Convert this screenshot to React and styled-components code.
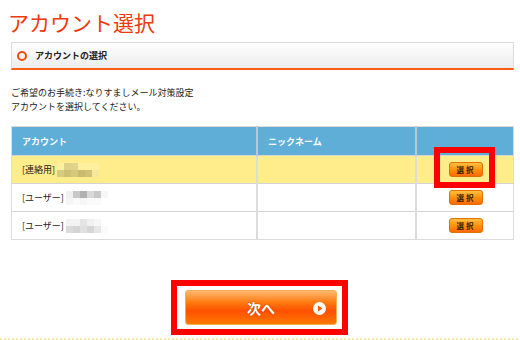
import React from "react";
import styled, {createGlobalStyle} from "styled-components";

const Global = createGlobalStyle`
  body {
    margin: 0;
    background: #fff;
    font-family: "Noto Sans CJK JP", "Noto Sans", sans-serif;
    color: #222;
  }
`
const Page = styled.div`
  width: 520px;
  height: 340px;
  overflow: hidden;
  position: relative;
  padding: 0 6px 0 11px;
  box-sizing: border-box;
`
const Title = styled.h1`
  margin: 0 0 0 -3px;
  padding-top: 10px;
  font-size: 21px;
  line-height: 24px;
  font-weight: normal;
  color: #ee3a0c;
`
const SectionBar = styled.div`
  margin-top: 8px;
  height: 25px;
  display: flex;
  align-items: center;
  gap: 8px;
  padding-left: 5px;
  border: 1px solid #dcdcdc;
  border-bottom: 2px solid #ff5a14;
  background: linear-gradient(#ffffff, #ececec);
  font-size: 9px;
  font-weight: bold;
`
const Ring = styled.span`
  width: 6px;
  height: 6px;
  border: 2px solid #f04a10;
  border-radius: 50%;
`
const Lead = styled.p`
  margin: 16px 0 0;
  font-size: 9px;
  line-height: 14px;
`
const Table = styled.table`
  margin-top: 12px;
  width: 503px;
  table-layout: fixed;
  border-collapse: collapse;
  font-size: 9px;
  border: 1px solid #dcdcdc;
`
const Th = styled.th`
  height: 28px;
  background: #5eaed8;
  color: #fff;
  text-align: left;
  padding: 0 0 0 10px;
  font-weight: bold;
  border-right: 2px solid #b8c8d4;
  width: ${p => p.$w ? p.$w + "px" : "auto"};
  &:last-child { border-right: none; }
`
const Tr = styled.tr`
  background: ${p => p.$hl ? "#ffed8c" : "#fff"};
  border-top: 1px solid #d4d4d4;
`
const Td = styled.td`
  height: 27px;
  padding: 0 0 0 10px;
  border-right: 2px solid #dcdcdc;
  text-align: ${p => p.$center ? "center" : "left"};
  &:last-child { border-right: none; padding: 0; }
`
const Name = styled.span`
  display: inline-flex;
  align-items: center;
  gap: 2px;
`
const Blur = styled.span`
  display: inline-grid;
  grid-template-columns: repeat(6, 7px);
  grid-template-rows: 7px 7px;
`
const Px = styled.span`
  background: ${p => p.$c};
`
const PickWrap = styled.span`
  position: relative;
  display: inline-block;
  margin-left: 2px;
  vertical-align: middle;
`
const PickBtn = styled.button`
  display: block;
  width: 34px;
  height: 15px;
  padding: 0;
  border: 1px solid #e07000;
  border-radius: 3px;
  background: linear-gradient(#ffc040, #ff9010 50%, #ff6a00);
  font-family: inherit;
  font-size: 7.5px;
  font-weight: bold;
  letter-spacing: 2px;
  color: #3a1a00;
  line-height: 13px;
`
const Highlight = styled.span`
  position: absolute;
  left: -15px;
  top: -15px;
  right: -12px;
  bottom: -11px;
  border: 6px solid #ff0000;
  pointer-events: none;
`
const Footer = styled.div`
  display: flex;
  justify-content: center;
  margin-top: 40px;
  padding-right: 6px;
`
const RedFrame = styled.div`
  border: 6px solid #ff0000;
  padding: 4px 5px 4px 8px;
`
const NextBtn = styled.button`
  width: 152px;
  height: 35px;
  border: 1px solid #f0b050;
  border-radius: 3px;
  background: linear-gradient(#ffb870, #ff7a10 35%, #ff5000 60%, #ff7800);
  color: #fff;
  font-family: inherit;
  font-size: 14px;
  font-weight: bold;
  display: flex;
  align-items: center;
  justify-content: center;
  position: relative;
  text-shadow: 0 0 2px #c03000;
`
const PlayIcon = styled.svg`
  position: absolute;
  right: 10px;
  top: 11px;
`
const Dots = styled.div`
  position: absolute;
  left: 0;
  right: 0;
  bottom: 0;
  height: 2px;
  background: repeating-linear-gradient(90deg, #f8e8b0 0 2px, transparent 2px 4px);
`

const blurs = [
  ["#fff0a0", "#ddd088", "#e0d38c", "#fff0a0", "#fff0a0", "#fff0a0", "#d8cb80", "#cdbf74", "#d6c97e", "#c8ba70", "#cfc277", "#f6e89a"],
  ["#f0f0f0", "#c8c8c8", "#b0b0b0", "#d8d8d8", "#c8c8c8", "#f6f6f6", "#f4f4f4", "#fafafa", "#f6f6f6", "#fafafa", "#fafafa", "#fff"],
  ["#f2f2f2", "#f2f2f2", "#e4e4e4", "#f0f0f0", "#f6f6f6", "#fff", "#dadada", "#d4d4d4", "#e0e0e0", "#d6d6d6", "#e6e6e6", "#fafafa"]
]

const rows = [
  {label: "[連絡用]", hl: true},
  {label: "[ユーザー]"},
  {label: "[ユーザー]"}
]

const App = () => {
  return (
    <Page>
      <Global/>
      <Title>アカウント選択</Title>
      <SectionBar><Ring/>アカウントの選択</SectionBar>
      <Lead>
        ご希望のお手続き:なりすましメール対策設定<br/>
        アカウントを選択してください。
      </Lead>
      <Table>
        <thead>
          <tr>
            <Th $w={234}>アカウント</Th>
            <Th $w={147}>ニックネーム</Th>
            <Th></Th>
          </tr>
        </thead>
        <tbody>
          {rows.map((r, i) => (
            <Tr key={i} $hl={r.hl}>
              <Td>
                <Name>
                  {r.label}
                  <Blur>{blurs[i].map((c, j) => <Px key={j} $c={c}/>)}</Blur>
                </Name>
              </Td>
              <Td></Td>
              <Td $center>
                <PickWrap>
                  <PickBtn>選択</PickBtn>
                  {i === 0 && <Highlight/>}
                </PickWrap>
              </Td>
            </Tr>
          ))}
        </tbody>
      </Table>
      <Footer>
        <RedFrame>
          <NextBtn>
            次へ
            <PlayIcon width="13" height="13" viewBox="0 0 13 13">
              <circle cx="6.5" cy="6.5" r="6.5" fill="#fff"/>
              <path d="M5 3.5 L9.5 6.5 L5 9.5 Z" fill="#ff5a00"/>
            </PlayIcon>
          </NextBtn>
        </RedFrame>
      </Footer>
      <Dots/>
    </Page>
  )
}
export default App;
